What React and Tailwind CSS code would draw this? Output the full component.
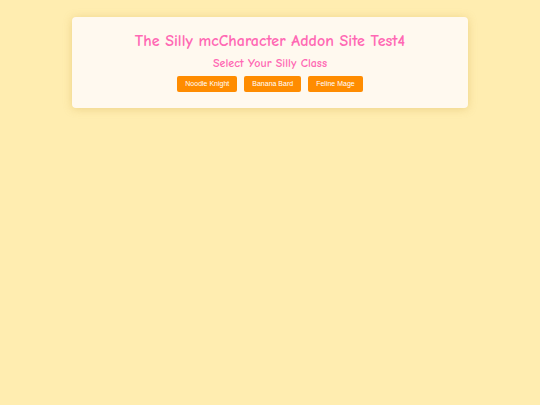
export default function App() {
  const classes = ["Noodle Knight", "Banana Bard", "Feline Mage"];
  return (
    <div className="min-h-[405px] w-full bg-[#ffedb0] pt-[17px]">
      <div className="mx-auto w-[396px] rounded-[4px] bg-[#fff9ef] pt-[14px] pb-[16px] shadow-[0_1px_8px_rgba(200,160,60,0.35)] text-center">
        <h1 className="text-[16px] leading-[20px] font-bold text-[#ff69b4] font-['Comic_Sans_MS','Comic_Neue',cursive]">
          The Silly mcCharacter Addon Site Test4
        </h1>
        <h2 className="mt-[4px] text-[12px] leading-[16px] font-bold text-[#ff69b4] font-['Comic_Sans_MS','Comic_Neue',cursive]">
          Select Your Silly Class
        </h2>
        <div className="mt-[5px] flex justify-center gap-[7px]">
          {classes.map((c) => (
            <button
              key={c}
              className="h-[16px] rounded-[2px] bg-[#ff8c00] px-[8px] text-[7px] leading-[16px] text-white font-['Liberation_Sans',Arial,sans-serif]"
            >
              {c}
            </button>
          ))}
        </div>
      </div>
    </div>
  );
}
